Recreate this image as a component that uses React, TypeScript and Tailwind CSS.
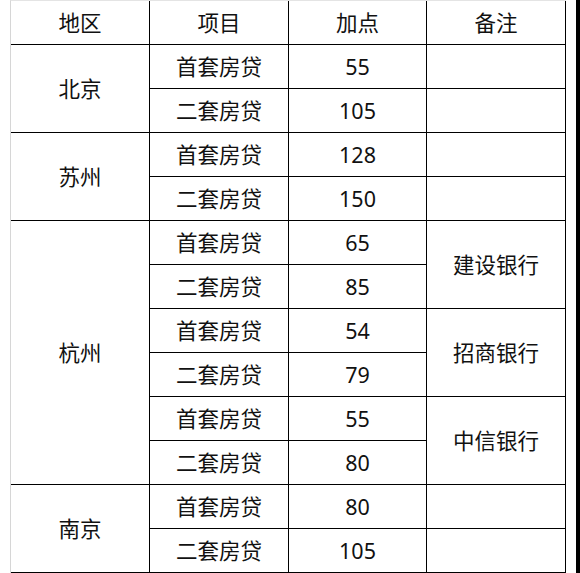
type Row = { item: string; points: string };

const groups: { region: string; rows: Row[]; notes: { text: string; span: number }[] }[] = [
  {
    region: "北京",
    rows: [
      { item: "首套房贷", points: "55" },
      { item: "二套房贷", points: "105" },
    ],
    notes: [
      { text: "", span: 1 },
      { text: "", span: 1 },
    ],
  },
  {
    region: "苏州",
    rows: [
      { item: "首套房贷", points: "128" },
      { item: "二套房贷", points: "150" },
    ],
    notes: [
      { text: "", span: 1 },
      { text: "", span: 1 },
    ],
  },
  {
    region: "杭州",
    rows: [
      { item: "首套房贷", points: "65" },
      { item: "二套房贷", points: "85" },
      { item: "首套房贷", points: "54" },
      { item: "二套房贷", points: "79" },
      { item: "首套房贷", points: "55" },
      { item: "二套房贷", points: "80" },
    ],
    notes: [
      { text: "建设银行", span: 2 },
      { text: "招商银行", span: 2 },
      { text: "中信银行", span: 2 },
    ],
  },
  {
    region: "南京",
    rows: [
      { item: "首套房贷", points: "80" },
      { item: "二套房贷", points: "105" },
    ],
    notes: [
      { text: "", span: 1 },
      { text: "", span: 1 },
    ],
  },
];

const cell = "h-[44px] p-0 text-center align-middle border-r border-b border-black";

export default function App() {
  // note cells start on rows where the running span resets
  const noteAt = (notes: { text: string; span: number }[], i: number) => {
    let acc = 0;
    for (const n of notes) {
      if (acc === i) return n;
      acc += n.span;
    }
    return null;
  };

  return (
    <div
      className="flex h-[573px] w-[580px] bg-white pl-[10px] text-[21.5px] leading-none text-[#111]"
      style={{ fontFamily: '"Noto Sans", "Noto Sans CJK SC", sans-serif' }}
    >
      <table className="h-[573px] w-[556px] table-fixed border-separate border-spacing-0 border-l border-t border-l-[#d6d6d6] border-t-[#e4e4e4]">
        <colgroup>
          <col className="w-[139px]" />
          <col className="w-[139px]" />
          <col className="w-[138px]" />
          <col className="w-[139px]" />
        </colgroup>
        <thead>
          <tr>
            <th className={`${cell} font-normal`}>地区</th>
            <th className={`${cell} font-normal`}>项目</th>
            <th className={`${cell} font-normal`}>加点</th>
            <th className={`${cell} font-normal`}>备注</th>
          </tr>
        </thead>
        <tbody>
          {groups.map((g) =>
            g.rows.map((r, i) => {
              const note = noteAt(g.notes, i);
              return (
                <tr key={g.region + i}>
                  {i === 0 && (
                    <td rowSpan={g.rows.length} className={cell}>
                      {g.region}
                    </td>
                  )}
                  <td className={cell}>{r.item}</td>
                  <td className={cell}>{r.points}</td>
                  {note && (
                    <td rowSpan={note.span} className={cell}>
                      {note.text}
                    </td>
                  )}
                </tr>
              );
            })
          )}
        </tbody>
      </table>
      <div className="ml-auto h-full w-[4px] bg-black" />
    </div>
  );
}
